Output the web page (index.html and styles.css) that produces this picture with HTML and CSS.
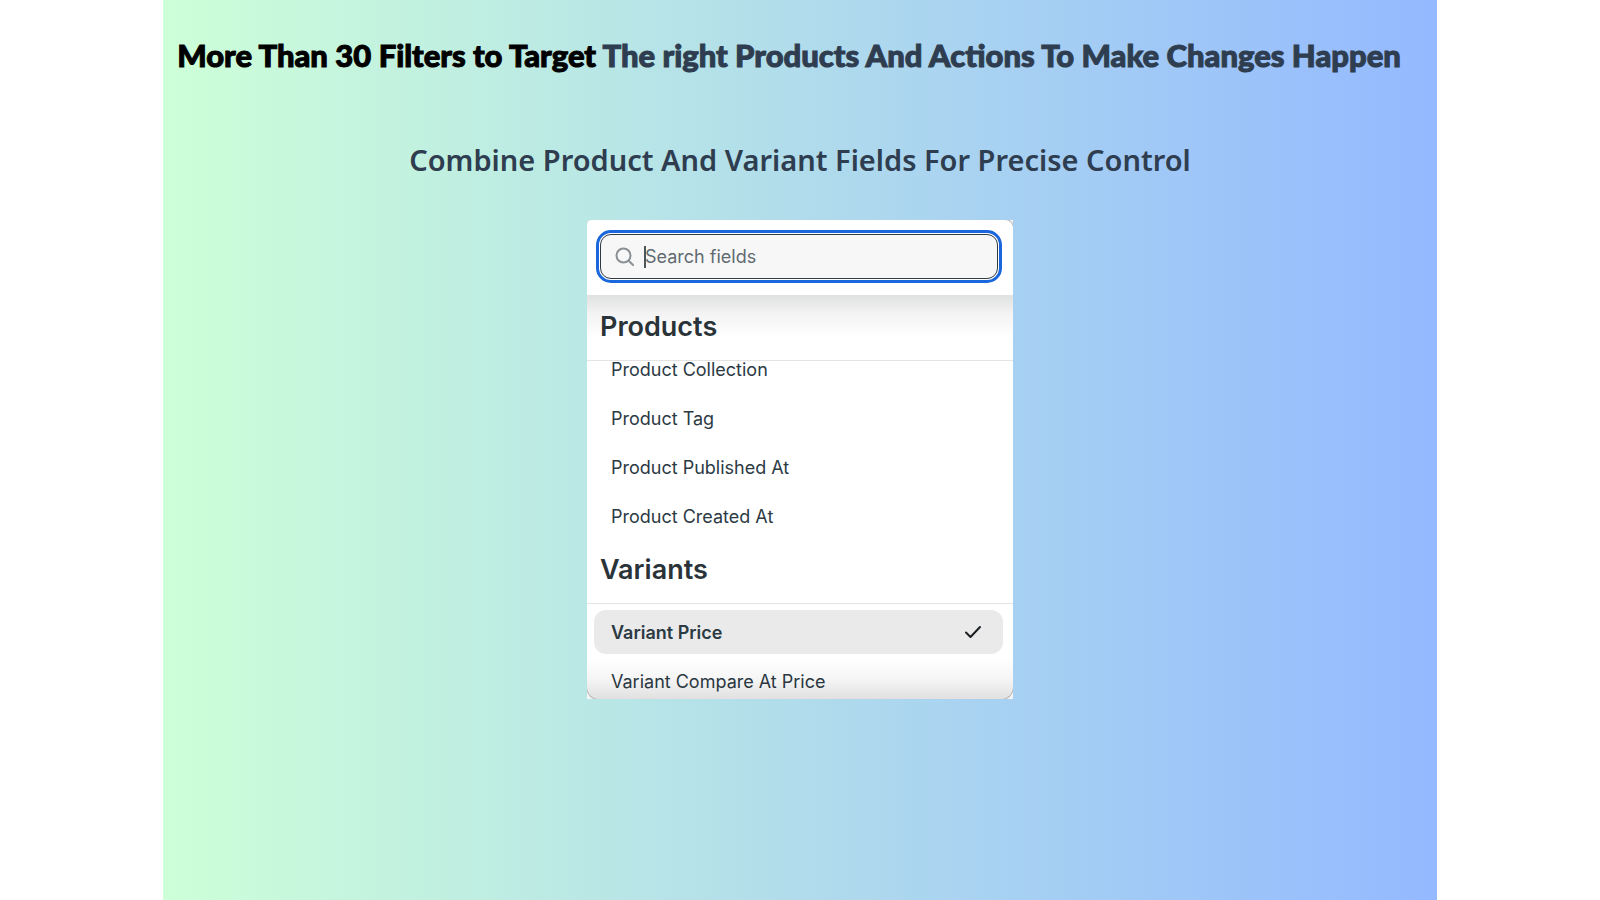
FILE: index.html
```html
<!DOCTYPE html>
<html lang="en">
<head>
  <meta charset="UTF-8" />
  <meta name="viewport" content="width=device-width, initial-scale=1.0"/>
  <title>Product and variant filters</title>
  <link rel="stylesheet" href="styles.css">
</head>
<body>

  <main class="slide">
    <h1><span class="strong">More Than 30 Filters to Target</span> The right Products And Actions To Make Changes Happen</h1>
    <p class="subtitle">Combine Product And Variant Fields For Precise Control</p>

    <div class="panel-frame">
      <div class="panel">
        <div class="panel-search">
          <label class="search-box" for="fieldSearch">
            <svg width="20" height="20" viewBox="0 0 20 20" fill="none" stroke="#8a9094" stroke-width="2" stroke-linecap="round" aria-hidden="true">
              <circle cx="8.5" cy="8.5" r="7"/>
              <path d="M13.7 13.7L18 18"/>
            </svg>
            <input type="text" id="fieldSearch" placeholder="Search fields" aria-label="Search fields">
          </label>
        </div>

        <div class="panel-list">
          <h2>Products</h2>
          <div class="options scrolled">
            <button class="option">Product Collection</button>
            <button class="option">Product Tag</button>
            <button class="option">Product Published At</button>
            <button class="option">Product Created At</button>
          </div>

          <h2>Variants</h2>
          <div class="options">
            <button class="option selected">
              Variant Price
              <svg width="18" height="14" viewBox="0 0 18 14" fill="none" stroke="#1a2024" stroke-width="2" stroke-linecap="round" stroke-linejoin="round" aria-hidden="true">
                <path d="M2 7.5L6.5 12L16 2"/>
              </svg>
            </button>
            <button class="option">Variant Compare At Price</button>
          </div>
        </div>
      </div>
    </div>
  </main>

</body>
</html>
```

FILE: styles.css
```css
* {
  box-sizing: border-box;
}

body {
  margin: 0;
  background: #fff;
  font-family: Inter, "Liberation Sans", sans-serif;
  color: #2c3a44;
}

.slide {
  width: 79.6%;
  min-height: 100vh;
  margin: 0 auto;
  background: linear-gradient(to right, #cdffd8, #94b9ff);
  display: flex;
  flex-direction: column;
  align-items: center;
}

h1 {
  align-self: stretch;
  margin: 0;
  padding: 35px 12px 0 14px;
  font-family: Lato, sans-serif;
  font-size: 31px;
  line-height: 40px;
  font-weight: 900;
  -webkit-text-stroke: 1px currentColor;
  color: #2e3d4f;
}

h1 .strong {
  color: #000;
}

.subtitle {
  margin: 65px 0 0;
  font-family: "Noto Sans", sans-serif;
  font-size: 29px;
  line-height: 40px;
  font-weight: 600;
  color: #2e3d4f;
}

/* Fields panel */
.panel-frame {
  width: 426px;
  max-width: 100%;
  margin-top: 40px;
  background: #f4f4f4;
  border-radius: 4px 0 0 0;
  overflow: hidden;
}

.panel {
  max-height: 479px;
  display: flex;
  flex-direction: column;
  position: relative;
  background: #fff;
  border-radius: 4px 8px 12px 12px;
  box-shadow: 0 0 0 1px #b5b5b5;
  overflow: hidden;
}

.panel::after {
  content: "";
  position: absolute;
  left: 0;
  right: 0;
  bottom: 0;
  height: 40px;
  background: linear-gradient(to top, rgba(0,0,0,0.12), rgba(0,0,0,0.04) 50%, rgba(0,0,0,0));
  pointer-events: none;
}

.panel-search {
  flex: none;
  padding: 14px 15px 16px 13px;
}

.search-box {
  display: flex;
  align-items: center;
  gap: 9px;
  height: 45px;
  padding: 0 14px;
  background: #f7f7f7;
  border: 1px solid #303b42;
  border-radius: 11px;
  outline: 3px solid #1a66dc;
  outline-offset: 1px;
}

.search-box input {
  flex: 1;
  min-width: 0;
  height: 22px;
  padding: 0;
  border: none;
  border-left: 2px solid #4a555c;
  background: none;
  font-family: inherit;
  font-size: 18px;
  text-indent: -1px;
  color: #2c3a44;
  outline: none;
}

.search-box input::placeholder {
  color: #616b71;
  opacity: 1;
}

.panel-list {
  flex: 1;
  min-height: 0;
  overflow: hidden;
}

h2 {
  position: relative;
  margin: 0;
  height: 66px;
  padding: 0 13px;
  background: #fff;
  border-bottom: 1px solid #e3e3e3;
  font-size: 27px;
  line-height: 64px;
  font-weight: 600;
  color: #2a3338;
}

.panel-list h2:first-child {
  background: linear-gradient(to bottom, #dfe0e0, #f3f3f3 18px, #fff 42px);
}

.options {
  display: flex;
  flex-direction: column;
  gap: 5px;
  padding: 6px 10px 0 7px;
}

/* first row sits partly under the Products heading */
.options.scrolled {
  margin-top: -14px;
  padding-top: 0;
}

.option {
  display: flex;
  align-items: center;
  justify-content: space-between;
  flex: none;
  height: 44px;
  padding: 0 21px 0 17px;
  border: none;
  border-radius: 12px;
  background: none;
  font-family: inherit;
  font-size: 18px;
  color: #2c3a44;
  text-align: left;
  cursor: pointer;
}

.option.selected {
  background: #eaeaea;
  font-weight: 600;
}
```
